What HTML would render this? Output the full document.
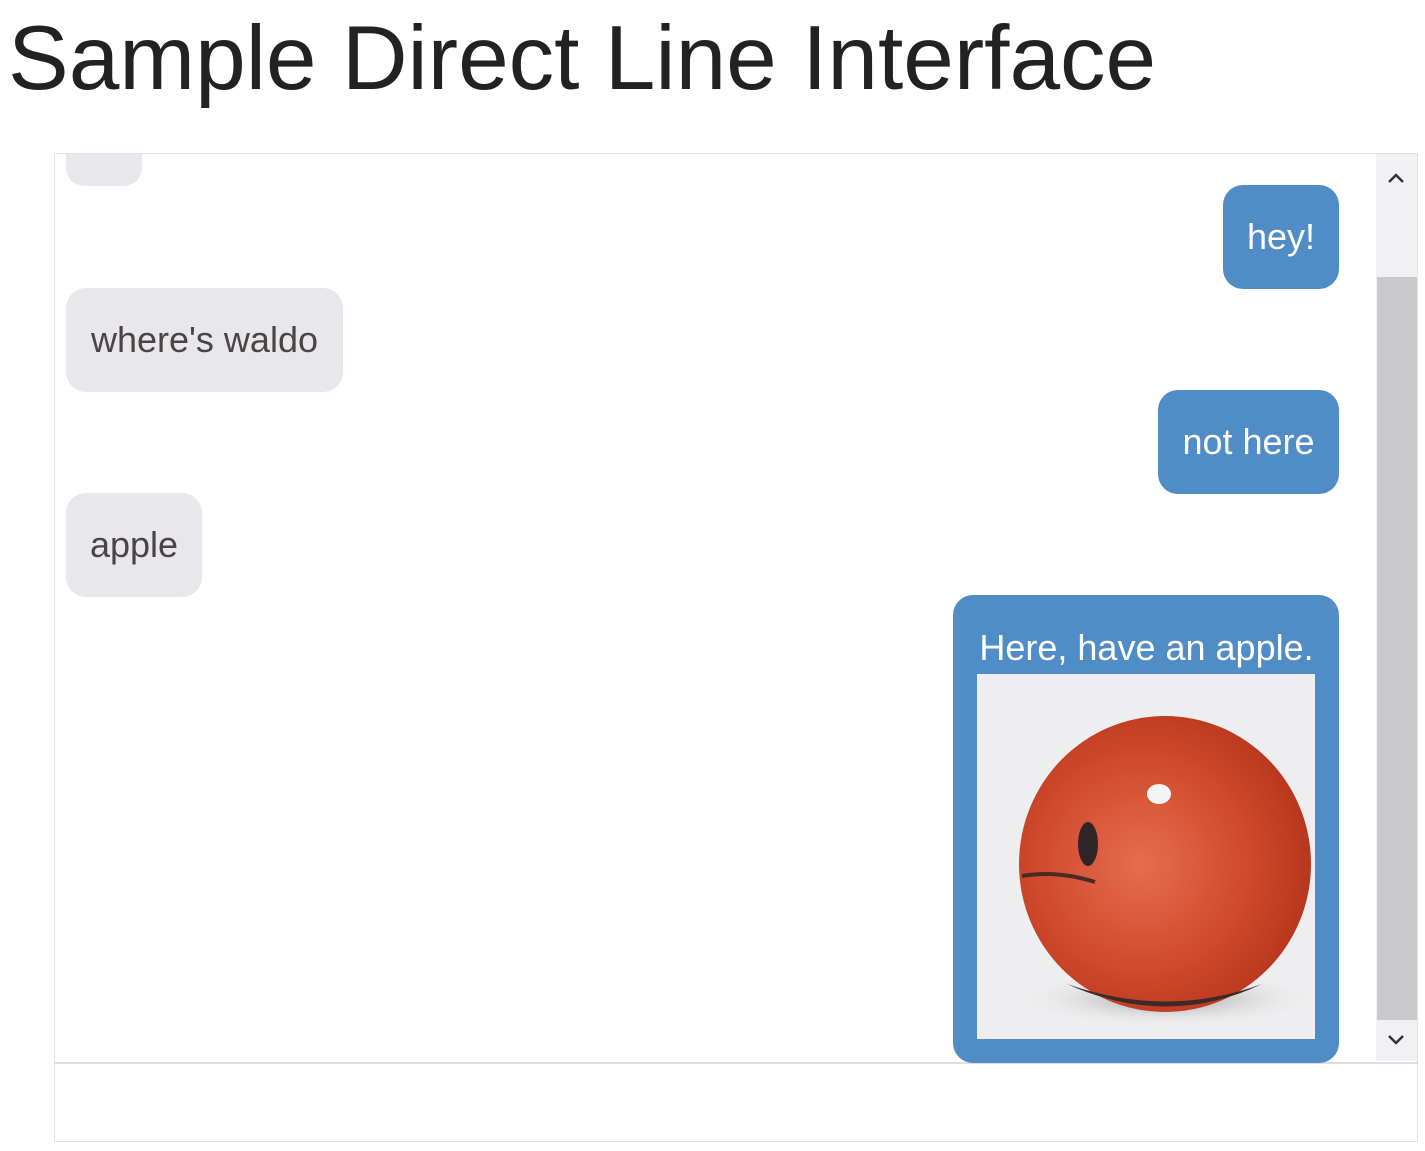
<!DOCTYPE html>
<html><head><style>
body{margin:0;width:1425px;height:1151px;background:#fff;position:relative;overflow:hidden;font-family:"Liberation Sans",Arial,sans-serif}
h1{position:absolute;left:8px;top:7px;margin:0;font-weight:normal;font-size:91px;line-height:104px;color:#222}
.box{position:absolute;left:54px;top:153px;width:1364px;height:989px;border:1px solid #e2e2e6;box-sizing:border-box}
.inp{position:absolute;left:54px;top:1062px;width:1364px;height:2px;background:#dedee2}
.b{position:absolute;box-sizing:border-box;border-radius:20px;font-size:36px;line-height:104px;white-space:nowrap}
.u{background:#508cc6;color:#fff;text-align:center}
.g{background:#e8e8ec;color:#4a4444;text-align:center}
.track{position:absolute;left:1376px;top:154px;width:41px;height:907px;background:#f1f1f3}
.thumb{position:absolute;left:1377px;top:277px;width:40px;height:743px;background:#c9c9cc}
</style></head><body>
<h1>Sample Direct Line Interface</h1>
<div class="box"></div>
<div class="inp"></div>
<div class="track"></div>
<div class="thumb"></div>
<svg style="position:absolute;left:1386px;top:170px" width="20" height="16"><path d="M3 12 L10 5 L17 12" stroke="#333" stroke-width="2.5" fill="none"/></svg>
<svg style="position:absolute;left:1386px;top:1032px" width="20" height="16"><path d="M3 4 L10 11 L17 4" stroke="#333" stroke-width="2.5" fill="none"/></svg>
<div class="b g" style="left:66px;top:154px;width:76px;height:32px;border-radius:0 0 18px 18px"></div>
<div class="b u" style="left:1223px;top:185px;width:116px;height:104px">hey!</div>
<div class="b g" style="left:66px;top:288px;width:277px;height:104px">where's waldo</div>
<div class="b u" style="left:1158px;top:390px;width:181px;height:104px">not here</div>
<div class="b g" style="left:66px;top:493px;width:136px;height:104px">apple</div>
<div class="b u" style="left:953px;top:595px;width:386px;height:468px">
<div style="position:absolute;left:0;right:0;top:0;height:104px;line-height:106px;padding-left:1px">Here, have an apple.</div>
<svg style="position:absolute;left:24px;top:79px" width="338" height="365" viewBox="0 0 338 365">
<defs>
<radialGradient id="a" cx="0.42" cy="0.5" r="0.6">
<stop offset="0" stop-color="#e56d4f"/><stop offset="0.6" stop-color="#d04a2c"/><stop offset="1" stop-color="#b5351b"/></radialGradient>
<radialGradient id="s" cx="0.5" cy="0.5" r="0.5"><stop offset="0" stop-color="#999"/><stop offset="1" stop-color="#eee" stop-opacity="0"/></radialGradient>
</defs>
<rect width="338" height="365" fill="#eeeef0"/>
<ellipse cx="190" cy="325" rx="150" ry="28" fill="url(#s)"/>
<ellipse cx="188" cy="190" rx="146" ry="148" fill="url(#a)"/>
<path d="M90 310 Q190 355 285 310 Q190 345 90 310Z" fill="#3a2a28"/>
<ellipse cx="111" cy="170" rx="10" ry="22" fill="#2e2626"/>
<path d="M45 202 Q80 196 118 208" stroke="#4a2a26" stroke-width="4" fill="none"/>
<ellipse cx="182" cy="120" rx="12" ry="10" fill="#f4f4f4"/>
</svg>
</div>
</body></html>
